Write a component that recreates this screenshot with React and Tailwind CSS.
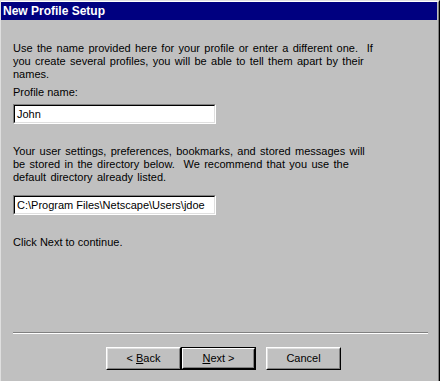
function Button({ children, isDefault }) {
  if (isDefault) {
    return (
      <div className="w-[75px] h-[23px] border border-black">
        <div className="h-full border border-t-white border-l-white border-r-black border-b-black">
          <div className="h-full border border-t-transparent border-l-transparent border-r-[#808080] border-b-[#808080] flex items-center justify-center">
            {children}
          </div>
        </div>
      </div>
    );
  }
  return (
    <div className="w-[75px] h-[23px] border border-t-white border-l-white border-r-black border-b-black">
      <div className="h-full border border-t-[#dfdfdf] border-l-[#dfdfdf] border-r-[#808080] border-b-[#808080] flex items-center justify-center">
        {children}
      </div>
    </div>
  );
}

function TextBox({ value }) {
  return (
    <div className="w-[203px] h-[20px] border border-t-[#808080] border-l-[#808080] border-r-white border-b-white">
      <div className="h-full border border-t-black border-l-black border-r-[#dfdfdf] border-b-[#dfdfdf] bg-white pl-[2px] flex items-center whitespace-nowrap">
        {value}
      </div>
    </div>
  );
}

export default function App() {
  return (
    <div className="w-[440px] h-[381px] overflow-hidden bg-[#c0c0c0] border-l border-t border-r border-l-[#dfdfdf] border-t-[#dfdfdf] border-r-black font-['Liberation_Sans',Arial,sans-serif] text-[11px] leading-[13px] text-black">
      <div className="h-full border-t border-r border-t-white border-r-[#808080] pr-px">
        <div className="h-[18px] bg-[#000080] text-white font-bold text-[12px] pl-[2px] flex items-center">
          New Profile Setup
        </div>

        <div className="pl-[12px] pt-[22px] whitespace-pre">
          <div className="[word-spacing:1.3px]">
            <div>Use the name provided here for your profile or enter a different one.  If</div>
            <div>you create several profiles, you will be able to tell them apart by their</div>
            <div>names.</div>
          </div>

          <div className="mt-[5px]">Profile name:</div>
          <div className="mt-[5px]">
            <TextBox value="John" />
          </div>

          <div className="mt-[21px] [word-spacing:1.3px]">
            <div>Your user settings, preferences, bookmarks, and stored messages will</div>
            <div>be stored in the directory below.  We recommend that you use the</div>
            <div>default directory already listed.</div>
          </div>

          <div className="mt-[11px]">
            <TextBox value="C:\Program Files\Netscape\Users\jdoe" />
          </div>

          <div className="mt-[21px]">Click Next to continue.</div>

          <div className="mt-[83px] w-[415px] border-t border-b border-t-[#808080] border-b-white" />

          <div className="mt-[13px] ml-[93px] flex">
            <Button>
              &lt; <span className="underline">B</span>ack
            </Button>
            <Button isDefault>
              <span className="underline">N</span>ext &gt;
            </Button>
            <div className="ml-[10px]">
              <Button>Cancel</Button>
            </div>
          </div>
        </div>
      </div>
    </div>
  );
}
